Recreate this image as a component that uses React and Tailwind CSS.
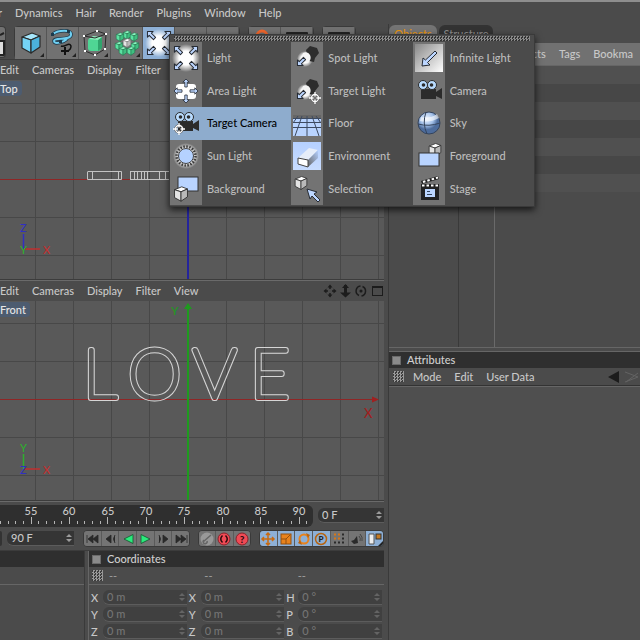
import React from 'react'

const TOP_MENU = ['Dynamics', 'Hair', 'Render', 'Plugins', 'Window', 'Help']
const VIEW_MENU = ['Edit', 'Cameras', 'Display', 'Filter', 'View']
const GRID_X = [35, 73, 111, 149, 226, 264, 302, 340, 378]
const FRAMES = [55, 60, 65, 70, 75, 80, 85, 90]

const SHADES = {
  white: ['#ffffff', '#e4e4e4', '#b9b9b9'],
  blue: ['#a5e6fb', '#74d3f5', '#4bb2dc'],
  green: ['#8af5c0', '#5be3a2', '#3fbf80'],
}

function Cube({ x, y, k = 1, shade = 'white', line = '#2a2a2a' }) {
  const [top, left, right] = SHADES[shade]
  return (
    <g transform={`translate(${x} ${y}) scale(${k})`} stroke={line} strokeWidth="1.2" strokeLinejoin="round">
      <path d="M1-10 9-7 0-3-9-6Z" fill={top} />
      <path d="M-9-6 0-3V10L-9 5Z" fill={left} />
      <path d="M0-3 9-7V4L0 10Z" fill={right} />
    </g>
  )
}

function Arrow({ x, y, r = 0, k = 1 }) {
  return (
    <path
      d="M0-5 4-1H1.5V5H-1.5V-1H-4Z"
      transform={`translate(${x} ${y}) rotate(${r}) scale(${k})`}
      fill="#bcd6ff"
      stroke="#262b33"
      strokeLinejoin="round"
    />
  )
}

function Target({ x, y }) {
  return (
    <g transform={`translate(${x} ${y})`} fill="none">
      <circle r="3.5" stroke="#555" strokeWidth="2.5" />
      <circle r="3.5" stroke="#fff" strokeWidth="1.3" />
      <path d="M0-6V-1.5M0 1.5V6M-6 0H-1.5M1.5 0H6" stroke="#fff" strokeWidth="1.3" />
    </g>
  )
}

function CameraShape() {
  return (
    <g>
      <path d="M6 12H21V15L27 11V22L21 19V22H6Z" fill="#2b2b2b" />
      <circle cx="8" cy="8" r="4.5" fill="#b9dcff" stroke="#2b2b2b" />
      <circle cx="17" cy="8" r="4.5" fill="#b9dcff" stroke="#2b2b2b" />
      <circle cx="8.5" cy="8" r="1.8" fill="#2b2b2b" />
      <circle cx="16.5" cy="8" r="1.8" fill="#2b2b2b" />
    </g>
  )
}

function SpotShape() {
  return (
    <g>
      <circle cx="12" cy="15" r="8" fill="url(#glow)" />
      <path d="M13 6 17 2 24 4 26 9 22 14 21 18 16 17Z" fill="#2d2d2d" />
      <path d="M10 9Q15 7 17 11T15 19Q9 18 8 14Z" fill="#f4f4f4" />
      <Arrow x={8} y={18} r={225} />
    </g>
  )
}

const ICONS = {
  light: (
    <>
      <circle cx="14" cy="14" r="14" fill="url(#glow)" />
      <rect x="8" y="7" width="12" height="14" rx="3" fill="#fff" />
      <Arrow x={6} y={6} r={-45} />
      <Arrow x={22} y={6} r={45} />
      <Arrow x={6} y={22} r={-135} />
      <Arrow x={22} y={22} r={135} />
    </>
  ),
  area: (
    <>
      <rect x="4" y="7" width="20" height="15" rx="3" fill="#fff" />
      <Arrow x={14} y={6} k={0.8} />
      <Arrow x={14} y={22} r={180} k={0.8} />
      <Arrow x={6} y={14} r={-90} k={0.8} />
      <Arrow x={22} y={14} r={90} k={0.8} />
    </>
  ),
  targetCamera: (
    <>
      <CameraShape />
      <Target x={7} y={20} />
    </>
  ),
  sun: (
    <>
      <circle cx="14" cy="14" r="13" fill="url(#glow)" />
      <circle cx="14" cy="14" r="9.5" fill="none" stroke="#3a3a3a" strokeWidth="2.5" strokeDasharray="1.5 1.484" />
      <circle cx="14" cy="14" r="7.5" fill="#b5d2ff" stroke="#444" />
    </>
  ),
  background: (
    <>
      <rect x="6" y="2" width="20" height="14" fill="#b9d4ff" stroke="#333" />
      <Cube x={9} y={19} k={0.72} />
    </>
  ),
  spot: <SpotShape />,
  targetSpot: (
    <>
      <SpotShape />
      <Target x={22} y={21} />
    </>
  ),
  floor: (
    <>
      <path d="M0 6H28V27H0Z" fill="#b9d4ff" />
      <path d="M0 6H28V9H0Z" fill="#666" />
      <path d="M0 9.5H28M0 13.5H28M0 18.5H28M14 7V27M9 7 2 27M19 7 26 27M5 7 0 14M23 7 28 14" stroke="#3d4a60" fill="none" />
    </>
  ),
  environment: (
    <>
      <rect width="28" height="28" fill="url(#fog)" />
      <path d="M5 16 16 6 25 8 15 18Z" fill="#e6edf9" />
      <path d="M15 18 25 8V16L15 25Z" fill="url(#side)" />
      <path d="M5 16 15 18V25L5 22Z" fill="#fff" stroke="#444" strokeLinejoin="round" />
    </>
  ),
  selection: (
    <>
      <Cube x={8} y={8} k={0.65} />
      <path d="M14 14 24 17 21 19 27 25 25 27 19 21 17 24Z" fill="#bcd6ff" stroke="#262b33" strokeLinejoin="round" />
    </>
  ),
  infinite: (
    <>
      <rect width="28" height="28" fill="url(#ramp)" />
      <path d="M7 22 8 14 10.5 16 20 7 22 9 12.5 18.5 15 21Z" fill="#bcd6ff" stroke="#262b33" strokeLinejoin="round" />
    </>
  ),
  camera: <CameraShape />,
  sky: (
    <>
      <circle cx="14" cy="14" r="11" fill="url(#sky)" stroke="#35445c" />
      <path d="M6 8Q15 10 22 5L24 9Q15 14 5 12Z" fill="#fff" opacity="0.6" />
      <path d="M3 15Q14 18 25 14M11 3Q7 14 12 25" fill="none" stroke="#35445c" />
    </>
  ),
  foreground: (
    <>
      <Cube x={20} y={8} k={0.65} />
      <rect x="4" y="11" width="20" height="13" fill="#b9d4ff" stroke="#333" />
    </>
  ),
  stage: (
    <>
      <path d="M6 6 23 1 24 4 7 9Z" fill="#222" />
      <path d="M8 7 23 2.5" stroke="#fff" strokeWidth="2" strokeDasharray="2.5 2" />
      <rect x="6" y="9" width="18" height="16" fill="#222" />
      <path d="M7 10.5H24" stroke="#fff" strokeWidth="2" strokeDasharray="2.5 2" />
      <rect x="10" y="14" width="10" height="8" fill="#bcd6ff" />
      <path d="M12 16.5H15M12 19.5H17" stroke="#34445c" />
    </>
  ),
}

const LIGHT_MENU = [
  [
    ['light', 'Light'],
    ['area', 'Area Light'],
    ['targetCamera', 'Target Camera'],
    ['sun', 'Sun Light'],
    ['background', 'Background'],
  ],
  [
    ['spot', 'Spot Light'],
    ['targetSpot', 'Target Light'],
    ['floor', 'Floor'],
    ['environment', 'Environment'],
    ['selection', 'Selection'],
  ],
  [
    ['infinite', 'Infinite Light'],
    ['camera', 'Camera'],
    ['sky', 'Sky'],
    ['foreground', 'Foreground'],
    ['stage', 'Stage'],
  ],
]

function Icon({ name }) {
  return (
    <svg viewBox="0 0 28 28" className="w-7 h-7 shrink-0" aria-hidden="true">
      {ICONS[name]}
    </svg>
  )
}

// gradients shared by all the icons
function Gradients() {
  return (
    <svg className="absolute w-0 h-0" aria-hidden="true">
      <defs>
        <radialGradient id="glow">
          <stop offset="0.5" stopColor="#fff" />
          <stop offset="1" stopColor="#fff" stopOpacity="0" />
        </radialGradient>
        <radialGradient id="sky" cx="0.4" cy="0.3">
          <stop offset="0" stopColor="#eef5ff" />
          <stop offset="0.6" stopColor="#a3c0e8" />
          <stop offset="1" stopColor="#4d6c9c" />
        </radialGradient>
        <linearGradient id="ramp" x1="0" y1="0" x2="1" y2="1">
          <stop offset="0" stopColor="#888" />
          <stop offset="1" stopColor="#fff" />
        </linearGradient>
        <linearGradient id="fog" x1="0" y1="0" x2="0" y2="1">
          <stop offset="0" stopColor="#b5d0ff" />
          <stop offset="1" stopColor="#c8dcff" />
        </linearGradient>
        <linearGradient id="side" x1="0" y1="1" x2="1" y2="0">
          <stop offset="0" stopColor="#666" />
          <stop offset="1" stopColor="#b5d0ff" />
        </linearGradient>
      </defs>
    </svg>
  )
}

function LightMenu() {
  return (
    <div className="absolute z-20 left-[26px] top-[7px] w-[366px] h-[173px] flex flex-col bg-[#4b4b4b] border border-[#3a3a3a] shadow-[0_3px_7px_rgba(0,0,0,0.7)]">
      <div className="h-[5px] mx-1 mt-px mb-px shrink-0 bg-[repeating-conic-gradient(#8a8a8a_0_25%,#333_0_50%)] bg-[length:3px_3px]" />
      <div className="flex-1 grid grid-cols-3 pb-px">
        {LIGHT_MENU.map((col) => (
          <div key={col[0][1]} className="grid grid-rows-5">
            {col.map(([icon, label]) => {
              const active = label === 'Target Camera'
              return (
                <button key={label} className={`flex items-center text-left ${active ? 'bg-[#8eaccd] text-black' : 'text-[#bdbdbd]'}`}>
                  <span className={`w-8 h-full flex items-center justify-center ${active ? '' : 'bg-[#737373]'}`}>
                    <Icon name={icon} />
                  </span>
                  <span className="pl-[5px]">{label}</span>
                </button>
              )
            })}
          </div>
        ))}
      </div>
    </div>
  )
}

function Tool({ label, active, children }) {
  return (
    <button
      aria-label={label}
      className={`relative w-8 h-8 flex items-center justify-center border-r border-[#555] ${active ? 'bg-[#8eb0d6]' : 'bg-[#717171]'}`}
    >
      {children}
      {!active && <span className="absolute right-0.5 bottom-0.5 border-4 border-transparent border-r-[#222] border-b-[#222] w-0 h-0 scale-50 origin-bottom-right" />}
    </button>
  )
}

function Toolbar() {
  return (
    <div className="h-9 pt-0.5 flex gap-2 border-b border-[#3c3c3c]">
      <button aria-label="Render settings" className="w-1.5 h-8 bg-[#717171] border border-l-0 border-[#3a3a3a] rounded-r-sm overflow-hidden">
        <svg viewBox="0 0 6 32" className="w-1.5 h-8" aria-hidden="true">
          <path d="M0 8 4 6M0 14H4V28H0" stroke="#222" strokeWidth="2" fill="#ddd" />
        </svg>
      </button>
      <div className="flex rounded-sm border border-[#3a3a3a] h-[33px] shrink-0">
        <Tool label="Cube">
          <svg viewBox="0 0 28 28" className="w-7 h-7"><Cube x={14} y={14} shade="blue" /></svg>
        </Tool>
        <Tool label="Spline">
          <svg viewBox="0 0 28 28" className="w-7 h-7" fill="none">
            <path d="M4 5C9 1 23 0 22 6S5 8 5 12S15 13 18 10" stroke="#1d3a4c" strokeWidth="3.5" />
            <path d="M4 5C9 1 23 0 22 6S5 8 5 12S15 13 18 10" stroke="#6fcff2" strokeWidth="2" />
            <path d="M12 17C16 19 20 12 22 17Q22 21 18 22" stroke="#111" strokeWidth="1.5" />
            <path d="M16 18V26M12 22H20" stroke="#111" strokeWidth="2" />
            <path d="M2 4h3v3h-3zM18 1h3v3h-3zM10 11h3v3h-3z" fill="#1d3a4c" />
          </svg>
        </Tool>
        <Tool label="HyperNURBS">
          <svg viewBox="0 0 28 28" className="w-7 h-7" fill="none">
            <rect x="7" y="9" width="13" height="13" rx="3" fill="#4fd694" />
            <path d="M17 10 21 8V19L17 22Z" fill="#2fa56c" />
            <path d="M8 10 12 7 21 8 17 11Z" fill="#8df0be" />
            <path d="M3 7 14 9 25 5 16 2ZM3 7 4 22 14 26 24 20 25 5" stroke="#2a2a2a" />
            <path d="M2 6h2v2h-2zM15 1h2v2h-2zM24 4h2v2h-2zM3 21h2v2h-2zM13 25h2v2h-2zM23 19h2v2h-2z" fill="#fff" />
          </svg>
        </Tool>
        <Tool label="Array">
          <svg viewBox="0 0 28 28" className="w-7 h-7">
            <Cube x={14} y={6} k={0.42} shade="green" line="#1f6b48" />
            <Cube x={7} y={8} k={0.42} shade="green" line="#1f6b48" />
            <Cube x={21} y={8} k={0.42} shade="green" line="#1f6b48" />
            <Cube x={6} y={17} k={0.42} shade="green" line="#1f6b48" />
            <Cube x={22} y={17} k={0.42} shade="green" line="#1f6b48" />
            <Cube x={10} y={22} k={0.42} shade="green" line="#1f6b48" />
            <Cube x={18} y={22} k={0.42} shade="green" line="#1f6b48" />
            <Cube x={14} y={14} k={0.42} line="#777" />
          </svg>
        </Tool>
        <div className="relative">
          <Tool label="Light objects" active>
            <Icon name="light" />
          </Tool>
          <LightMenu />
        </div>
        <Tool label="Deformer" />
        <Tool label="Particles" />
      </div>
      <div className="flex rounded-sm border border-[#3a3a3a] h-[33px] shrink-0">
        <Tool label="Help">
          <svg viewBox="0 0 28 28" className="w-7 h-7" fill="none">
            <circle cx="11" cy="7" r="5" stroke="#f0652b" strokeWidth="3" />
          </svg>
        </Tool>
        <Tool label="Layers">
          <svg viewBox="0 0 28 28" className="w-7 h-7"><rect x="3" y="3" width="22" height="18" rx="1" fill="#222" /></svg>
        </Tool>
      </div>
      <div className="flex rounded-sm border border-[#3a3a3a] h-[33px] shrink-0">
        <Tool label="Console">
          <svg viewBox="0 0 28 28" className="w-7 h-7"><rect x="3" y="3" width="22" height="18" rx="1" fill="#222" /></svg>
        </Tool>
      </div>
    </div>
  )
}

// L, O, V and E splines, seen as a thin contour
function LoveSpline() {
  const letters = [['L', 83], ['O', 128], ['V', 193], ['E', 250]]
  const glyphs = letters.map(([c, x]) => (
    <text key={c} x={x} y="97" fontSize="68" fontFamily="Lato" fontWeight="100">{c}</text>
  ))
  return (
    <>
      <mask id="contour" maskUnits="userSpaceOnUse" x="0" y="0" width="384" height="200">
        <g fill="#fff" stroke="#fff" strokeWidth="6" strokeLinejoin="round">{glyphs}</g>
        <g fill="#000" stroke="#000" strokeWidth="4" strokeLinejoin="round">{glyphs}</g>
      </mask>
      <rect x="60" y="30" width="260" height="90" fill="#d6d6d6" mask="url(#contour)" />
    </>
  )
}

function AxisGizmo({ y, up, upColor, origin, originColor }) {
  return (
    <g fontSize="11" fontFamily="Lato">
      <path d={`M23.5 ${y}V${y - 15}`} stroke={upColor} strokeWidth="1.5" />
      <path d={`M24 ${y}H40`} stroke="#c22f2f" strokeWidth="1.5" />
      <text x="20" y={y - 17} fill={upColor}>{up}</text>
      <text x="20" y={y + 5} fill={originColor}>{origin}</text>
      <text x="43" y={y + 5} fill="#c22f2f">X</text>
    </g>
  )
}

function Viewport({ name, axisY, children }) {
  return (
    <section className="flex-1 min-h-0 flex flex-col border-b border-[#6a6a6a]">
      <div className="h-5 shrink-0 flex items-center justify-between pr-px">
        <div className="flex gap-[13px]">
          {VIEW_MENU.map((m) => <button key={m}>{m}</button>)}
        </div>
        <svg viewBox="0 0 60 16" className="w-[60px] h-4" fill="none" stroke="#1c1c1c" strokeWidth="1.5" aria-hidden="true">
          <path d="M7 3V6M7 10V13M2 8H5M9 8H12" />
          <path d="M7 1.5 9.5 4.5H4.5ZM7 14.5 9.5 11.5H4.5ZM.5 8 3.5 5.5V10.5ZM13.5 8 10.5 5.5V10.5Z" fill="#1c1c1c" stroke="none" />
          <path d="M22.5 2V12" strokeWidth="3" />
          <path d="M22.5 1 26 5H19ZM22.5 14.5 28 9.5H17Z" fill="#1c1c1c" stroke="none" />
          <path d="M36 12.5A5 5 0 0 1 37.5 3M39.5 3.5A5 5 0 0 1 38.5 13" />
          <circle cx="38" cy="8" r="0.8" />
          <rect x="49.5" y="3.5" width="10" height="9" strokeWidth="1" />
          <path d="M49 4H60" strokeWidth="2" />
        </svg>
      </div>
      <div className="relative flex-1 min-h-0 bg-[#595959] border-b border-[#3c3c3c] overflow-hidden">
        <svg className="absolute inset-0 w-full h-full">
          <g stroke="#484848">
            {GRID_X.map((x) => <line key={x} x1={x + 0.5} x2={x + 0.5} y1="0" y2="100%" />)}
            {[-76, -38, 38, 76].map((d) => <line key={d} x1="0" x2="100%" y1={axisY + d} y2={axisY + d} />)}
          </g>
          <line x1="0" x2="378" y1={axisY} y2={axisY} stroke="#8f2626" />
          {children}
        </svg>
        <span className="absolute left-0 top-px h-[15px] leading-[15px] pr-1 rounded-r-sm bg-[#4d5c70] text-[#e6e6e6]">{name}</span>
      </div>
    </section>
  )
}

function Spin() {
  return (
    <svg viewBox="0 0 6 10" className="w-1.5 h-2.5 shrink-0 opacity-70" fill="currentColor" aria-hidden="true">
      <path d="M3 1 6 4H0ZM3 9 6 6H0Z" />
    </svg>
  )
}

function Field({ label, value, className = '' }) {
  return (
    <div className={`flex items-center h-[15px] min-w-0 rounded-l-md border-b border-[#5c5c5c] pl-1 pr-0.5 ${className}`}>
      <input aria-label={label} defaultValue={value} className="w-full min-w-0 bg-transparent outline-none" />
      <Spin />
    </div>
  )
}

function Timeline() {
  return (
    <div className="h-[25px] shrink-0 pt-[3px] flex gap-[5px]">
      <div className="w-[313px] h-[22px] shrink-0 bg-[#2f2f2f] rounded-r-md">
        <svg className="w-full h-full overflow-visible" stroke="#b5b5b5">
          {Array.from({ length: 41 }, (_, i) => {
            const x = 0.5 + Math.round(i * 7.66)
            const major = i % 5 === 4
            return <line key={i} x1={x} x2={x} y1={major ? 12 : 16} y2="19" />
          })}
          <g fill="#c8c8c8" stroke="none" textAnchor="middle">
            {FRAMES.map((f, i) => <text key={f} x={31 + Math.round(i * 38.3)} y="10">{f}</text>)}
          </g>
        </svg>
      </div>
      <Field label="Current frame" value="0 F" className="flex-1 mt-[3px] bg-[#353535]" />
    </div>
  )
}

const PLAY = [
  ['Go to start', 'M3 4V12M9 4 4 8 9 12ZM14 4 9 8 14 12Z', '#2a2a2a'],
  ['Previous frame', 'M9 4 4 8 9 12ZM13 4Q10 8 13 12', '#2a2a2a'],
  ['Play backwards', 'M13 3.5V12.5L4 8Z', '#2bea7c'],
  ['Play forwards', 'M4 3.5V12.5L13 8Z', '#2bea7c'],
  ['Next frame', 'M8 4 13 8 8 12ZM4 4Q7 8 4 12', '#2a2a2a'],
  ['Go to end', 'M14 4V12M3 4 8 8 3 12ZM8 4 13 8 8 12Z', '#2a2a2a'],
]

const KEYS = [
  ['Position', true, <path d="M8 2V14M2 8H14M6 4 8 2 10 4M6 12 8 14 10 12M4 6 2 8 4 10M12 6 14 8 12 10" stroke="#c96a10" strokeWidth="1.5" fill="none" />],
  ['Scale', true, <><rect x="3" y="3" width="10" height="10" fill="#e8821c" stroke="#94500f" /><path d="M3 8H8V13M8 8 12 4" stroke="#94500f" fill="none" /></>],
  ['Rotation', true, <><circle cx="8" cy="8" r="4.5" fill="none" stroke="#e8821c" strokeWidth="2" /><path d="M10 2 14 4 12 7ZM6 14 2 12 4 9Z" fill="#b8640f" /></>],
  ['Parameter', true, <><circle cx="8" cy="8" r="5.5" fill="none" stroke="#b8640f" strokeWidth="1.5" /><text x="8" y="11" fontSize="8" fontWeight="900" textAnchor="middle" fill="#222">P</text></>],
  ['Point level', false, <><path d="M3 3.5H10M3 7.5H10" stroke="#d97716" strokeWidth="2" strokeDasharray="2 2" /><path d="M3 11.5H14M11 3.5H14M11 7.5H14" stroke="#2a2a2a" strokeWidth="2" strokeDasharray="2 2" /></>],
  ['Sound', false, <><path d="M2 10 5 9 8 5 9 12 5 13Z" fill="#2a2a2a" /><path d="M10 5Q12 7 11 10M11 3Q14 6 13 10" stroke="#444" fill="none" /></>],
  ['Options', true, <><path d="M2 3H7V13H2Z" fill="#eee" stroke="#555" /><rect x="9" y="3" width="5" height="5" fill="#c47a24" stroke="#333" /><path d="M11 15 16 10V15Z" fill="#222" /></>],
]

function Transport() {
  const group = 'grid h-[17px] rounded-sm overflow-hidden border border-[#3a3a3a] gap-px bg-[#5a5a5a]'
  return (
    <div className="h-[23px] shrink-0 pt-[3px] flex items-start">
      <div className="w-0.5 h-[15px] mt-px rounded-r-sm bg-[#333]" />
      <Field label="Last frame" value="90 F" className="w-[67px] mt-px ml-[5px] shrink-0 bg-[#353535]" />
      <div className={`${group} grid-cols-6 w-[107px] ml-[9px] shrink-0`}>
        {PLAY.map(([label, d, color]) => (
          <button key={label} aria-label={label} className="bg-[#747474] flex justify-center items-center">
            <svg viewBox="0 0 16 16" className="w-4 h-4"><path d={d} fill={color} stroke={color === '#2a2a2a' ? color : '#14532d'} strokeWidth="0.8" /></svg>
          </button>
        ))}
      </div>
      <div className={`${group} grid-cols-3 w-[53px] ml-2 shrink-0`}>
        <button aria-label="Record" className="bg-[#747474] flex justify-center items-center">
          <svg viewBox="0 0 16 16" className="w-4 h-4" fill="none"><circle cx="8" cy="8" r="6.5" fill="#999" /><path d="M4 11 12 4M5 9A2 2 0 1 0 8 10" stroke="#666" strokeWidth="1.5" /></svg>
        </button>
        <button aria-label="Autokey" className="bg-[#747474] flex justify-center items-center">
          <svg viewBox="0 0 16 16" className="w-4 h-4" fill="none"><circle cx="8" cy="8" r="6" fill="#f04a55" stroke="#8a222a" /><path d="M6.5 4.5Q3 8 6.5 11.5M9.5 4.5Q13 8 9.5 11.5" stroke="#2c0c0e" strokeWidth="1.5" /></svg>
        </button>
        <button aria-label="Key selection" className="bg-[#747474] flex justify-center items-center">
          <svg viewBox="0 0 16 16" className="w-4 h-4"><circle cx="8" cy="8" r="6" fill="#f04a55" stroke="#8a222a" /><text x="8" y="12" fontSize="10" fontWeight="900" textAnchor="middle" fill="#2c0c0e">?</text></svg>
        </button>
      </div>
      <div className={`${group} grid-cols-7 flex-1 ml-2`}>
        {KEYS.map(([label, on, art]) => (
          <button key={label} aria-label={label} className={`flex justify-center items-center ${on ? 'bg-[#8eb0d6]' : 'bg-[#747474]'}`}>
            <svg viewBox="0 0 16 16" className="w-4 h-4">{art}</svg>
          </button>
        ))}
      </div>
    </div>
  )
}

function Grip() {
  return <span className="w-[11px] h-[11px] shrink-0 bg-[repeating-conic-gradient(#999_0_25%,#3c3c3c_0_50%)] bg-[length:3px_3px]" />
}

function PanelTitle({ children }) {
  return (
    <h2 className="h-4 shrink-0 flex items-center gap-1.5 px-[3px] bg-[#2f2f2f] text-[#d0d0d0]">
      {children && <span className="w-[9px] h-[9px] bg-[#8a8a8a] border border-[#6a6a6a]" />}
      {children}
    </h2>
  )
}

function Coordinates() {
  const rows = [['X', 'X', 'H'], ['Y', 'Y', 'P'], ['Z', 'Z', 'B']]
  return (
    <section className="flex-1 min-w-0 border-l border-[#666]">
      <PanelTitle>Coordinates</PanelTitle>
      <div className="h-[18px] grid grid-cols-3 items-center border-b border-[#666] pl-[3px] text-[#999]">
        <span className="flex items-center gap-1.5"><Grip />--</span>
        <span className="pl-[15px]">--</span>
        <span className="pl-[11px]">--</span>
      </div>
      <div className="grid grid-cols-3 gap-y-0.5 pt-[5px] pl-0.5">
        {rows.flatMap((row, r) => row.map((axis, c) => (
          <label key={`${r}${c}`} className="flex items-center gap-1 pr-0.5">
            <span className="w-2 shrink-0">{axis}</span>
            <Field value={c === 2 ? '0 °' : '0 m'} className="flex-1 bg-[#404040] text-[#747474]" />
          </label>
        )))}
      </div>
    </section>
  )
}

function ObjectManager() {
  return (
    <section className="flex-[53] min-h-0 flex flex-col">
      <div className="h-[18px] mt-px shrink-0 flex gap-0.5">
        <button className="w-12 rounded-t-md bg-[#747474] text-[#e8940f]">Objects</button>
        <button className="w-[54px] rounded-t-md bg-[#333] text-[#8a8a8a]">Structure</button>
      </div>
      <div className="h-[22px] shrink-0 flex items-center justify-end gap-[13px] pr-[7px] bg-[#717171]">
        {['Objects', 'Tags', 'Bookma'].map((m) => <button key={m}>{m}</button>)}
      </div>
      <div className="flex-1 min-h-0 flex border-y border-[#666]">
        <div className="w-[70px] border-r border-[#3a3a3a]" />
        <div className="w-9 border-r border-[#6a6a6a]" />
        <div className="flex-1">
          {[0, 1, 2, 3, 4, 5, 6].map((i) => (
            <div key={i} className={i % 2 ? 'h-[18px] bg-[#474747]' : 'h-[18px] bg-[#505050]'} />
          ))}
        </div>
      </div>
    </section>
  )
}

function Attributes() {
  return (
    <section className="flex-[47] min-h-0 mt-[3px] flex flex-col border-t border-[#666]">
      <PanelTitle>Attributes</PanelTitle>
      <div className="h-[18px] shrink-0 flex items-center gap-[13px] pl-1 border-b border-[#333]">
        <span className="-mr-1 flex"><Grip /></span>
        {['Mode', 'Edit', 'User Data'].map((m) => <button key={m}>{m}</button>)}
        <svg viewBox="0 0 34 14" className="w-[34px] h-3.5 ml-auto" aria-hidden="true">
          <path d="M2 7 13 1V13Z" fill="#1c1c1c" />
          <path d="M19 2 32 7 19 12M20 12 32 3" fill="none" stroke="#636363" />
        </svg>
      </div>
      <div className="flex-1 border-t border-[#666] bg-[#4f4f4f]" />
    </section>
  )
}

export default function App() {
  return (
    <div className="h-screen flex flex-col overflow-hidden bg-[#4b4b4b] text-[#c8c8c8] text-[11px] leading-[14px] font-medium font-['Lato',sans-serif]">
      <Gradients />
      <nav className="h-6 shrink-0 flex items-center gap-[13px] border-t-2 border-[#8e8e8e]">
        <span className="w-0.5 flex justify-end">r</span>
        {TOP_MENU.map((m) => <button key={m}>{m}</button>)}
      </nav>
      <main className="flex-1 min-h-0 grid grid-cols-[3fr_2fr]">
        <div className="min-w-0 min-h-0 flex flex-col">
          <Toolbar />
          <Viewport name="Top" axisY={99.5}>
            <line x1="188" x2="188" y1="99" y2="100%" stroke="#24249c" strokeWidth="2" />
            <path d="M88 91.5H121.5V99.5H87.5V91.5M92.5 91V100M118.5 91V100M130.5 91.5H188M130.5 99.5H188M130.5 91V100M134.5 91V100M137.5 91V100M141.5 91V100M144.5 91V100M147.5 91V100M159.5 91V100M165.5 91V100" fill="none" stroke="#c4c4c4" />
            <AxisGizmo y={169} up="Z" upColor="#3030c0" origin="Y" originColor="#2fae2f" />
          </Viewport>
          <Viewport name="Front" axisY={98.5}>
            <line x1="188" x2="188" y1="4" y2="100%" stroke="#1f9a1f" strokeWidth="2" />
            <path d="M188 2 192 8H184Z" fill="#1f9a1f" />
            <path d="M372 95.5 379 98.5 372 101.5Z" fill="#a02020" />
            <text x="171" y="14" fontSize="12" fill="#1f9a1f">Y</text>
            <text x="364" y="117" fontSize="13" fill="#a02020">X</text>
            <LoveSpline />
            <AxisGizmo y={168} up="Y" upColor="#2fae2f" origin="Z" originColor="#3030c0" />
          </Viewport>
          <Timeline />
          <Transport />
          <div className="h-[90px] shrink-0 flex gap-[3px] border-t border-[#3c3c3c]">
            <section className="w-[85px] shrink-0 border-r border-[#3a3a3a]">
              <PanelTitle />
              <div className="h-[18px] border-b border-[#666]" />
            </section>
            <Coordinates />
          </div>
        </div>
        <div className="min-w-0 min-h-0 flex flex-col border-l border-[#3a3a3a] ml-1">
          <ObjectManager />
          <Attributes />
        </div>
      </main>
    </div>
  )
}
